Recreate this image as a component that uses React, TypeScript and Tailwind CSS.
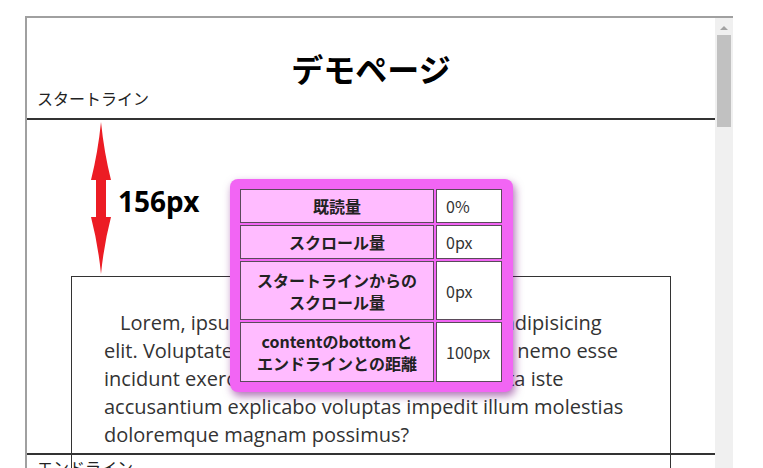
import React from 'react';

const jp = { fontFamily: '"Noto Sans CJK JP", "Noto Sans", sans-serif' };

const rows = [
    { label: ['既読量'], value: '0%', h: 'h-[34px]' },
    { label: ['スクロール量'], value: '0px', h: 'h-[34px]' },
    { label: ['スタートラインからの', 'スクロール量'], value: '0px', h: 'h-[59px]' },
    { label: ['contentのbottomと', 'エンドラインとの距離'], value: '100px', h: 'h-[60px]' },
];

const DoubleArrow: React.FC = () => (
    <svg width="22" height="152" viewBox="0 0 22 152" className="shrink-0">
        <path
            d="M11 0 Q14 30 21 58 L16 58 L16 95 L21 95 Q14 122 11 152 Q8 122 1 95 L6 95 L6 58 L1 58 Q8 30 11 0 Z"
            fill="#ec1c24"
        />
    </svg>
);

const Scrollbar: React.FC = () => (
    <div className="w-[18px] shrink-0 bg-[#f0f0f0] flex flex-col items-center">
        <div className="h-[17px] flex items-center justify-center pt-[2px]">
            <div className="w-0 h-0 border-l-[4px] border-r-[4px] border-b-[4px] border-l-transparent border-r-transparent border-b-[#a3a3a3]" />
        </div>
        <div className="w-[14px] h-[92px] bg-[#c1c1c1]" />
    </div>
);

const InfoPanel: React.FC = () => (
    <div className="absolute left-[230px] top-[179px] w-[283px] rounded-[8px] bg-[#f265f4] p-[10px] shadow-[2px_4px_8px_rgba(110,0,120,0.55)]" style={jp}>
        <div className="grid grid-cols-[194px_66px] gap-[2px]">
            {rows.map((r, i) => (
                <React.Fragment key={i}>
                    <div className={`${r.h} bg-[#ffbbff] border border-[#5a4a5a] flex flex-col items-center justify-center text-[16px] font-bold leading-[22px] text-[#222]`}>
                        {r.label.map((l) => (
                            <span key={l}>{l}</span>
                        ))}
                    </div>
                    <div className={`${r.h} bg-white border border-[#5a4a5a] flex items-center pl-[9px] text-[16px] text-[#333]`}>
                        {r.value}
                    </div>
                </React.Fragment>
            ))}
        </div>
    </div>
);

export default function App() {
    return (
        <div className="relative h-[468px] w-[763px] overflow-hidden bg-white">
            <div className="ml-[25px] mt-[16px] w-[708px] h-[452px] border-t-2 border-l-2 border-[#a0a0a0] flex">
                <div className="relative flex-1 overflow-hidden">
                    <h1 className="pt-[32px] text-center text-[32px] font-bold leading-[36px] text-black" style={jp}>
                        デモページ
                    </h1>
                    <div className="pl-[10px] text-[16px] leading-[24px] text-[#222]" style={jp}>
                        スタートライン
                    </div>
                    <div className="mt-[8px] h-[2px] bg-[#333]" />

                    <div className="h-[156px] flex items-start pl-[63px] pt-[2px]">
                        <DoubleArrow />
                        <span className="ml-[6px] mt-[61px] text-[28px] font-bold leading-[36px] text-black" style={{ fontFamily: '"Noto Sans", sans-serif' }}>
                            156px
                        </span>
                    </div>

                    <div className="mx-auto w-[600px] border border-[#333] px-[32px] pt-[32px] pb-[120px]">
                        <p className="indent-[16px] text-[20px] leading-[28px] text-[#333]" style={{ fontFamily: '"Open Sans", sans-serif' }}>
                            Lorem, ipsum dolor sit amet consectetur adipisicing elit. Voluptatem, perspiciatis doloribus quas nemo esse incidunt exercitationem ut quisquam sit dicta iste accusantium explicabo voluptas impedit illum molestias doloremque magnam possimus?
                        </p>
                    </div>

                    {/* end line overlays the content box */}
                    <div className="absolute left-0 right-0 top-[435px] h-[2px] bg-[#333]" />
                    <div className="absolute left-[10px] top-[437px] text-[16px] leading-[24px] text-[#222]" style={jp}>
                        エンドライン
                    </div>
                </div>
                <Scrollbar />
            </div>
            <InfoPanel />
        </div>
    );
}
